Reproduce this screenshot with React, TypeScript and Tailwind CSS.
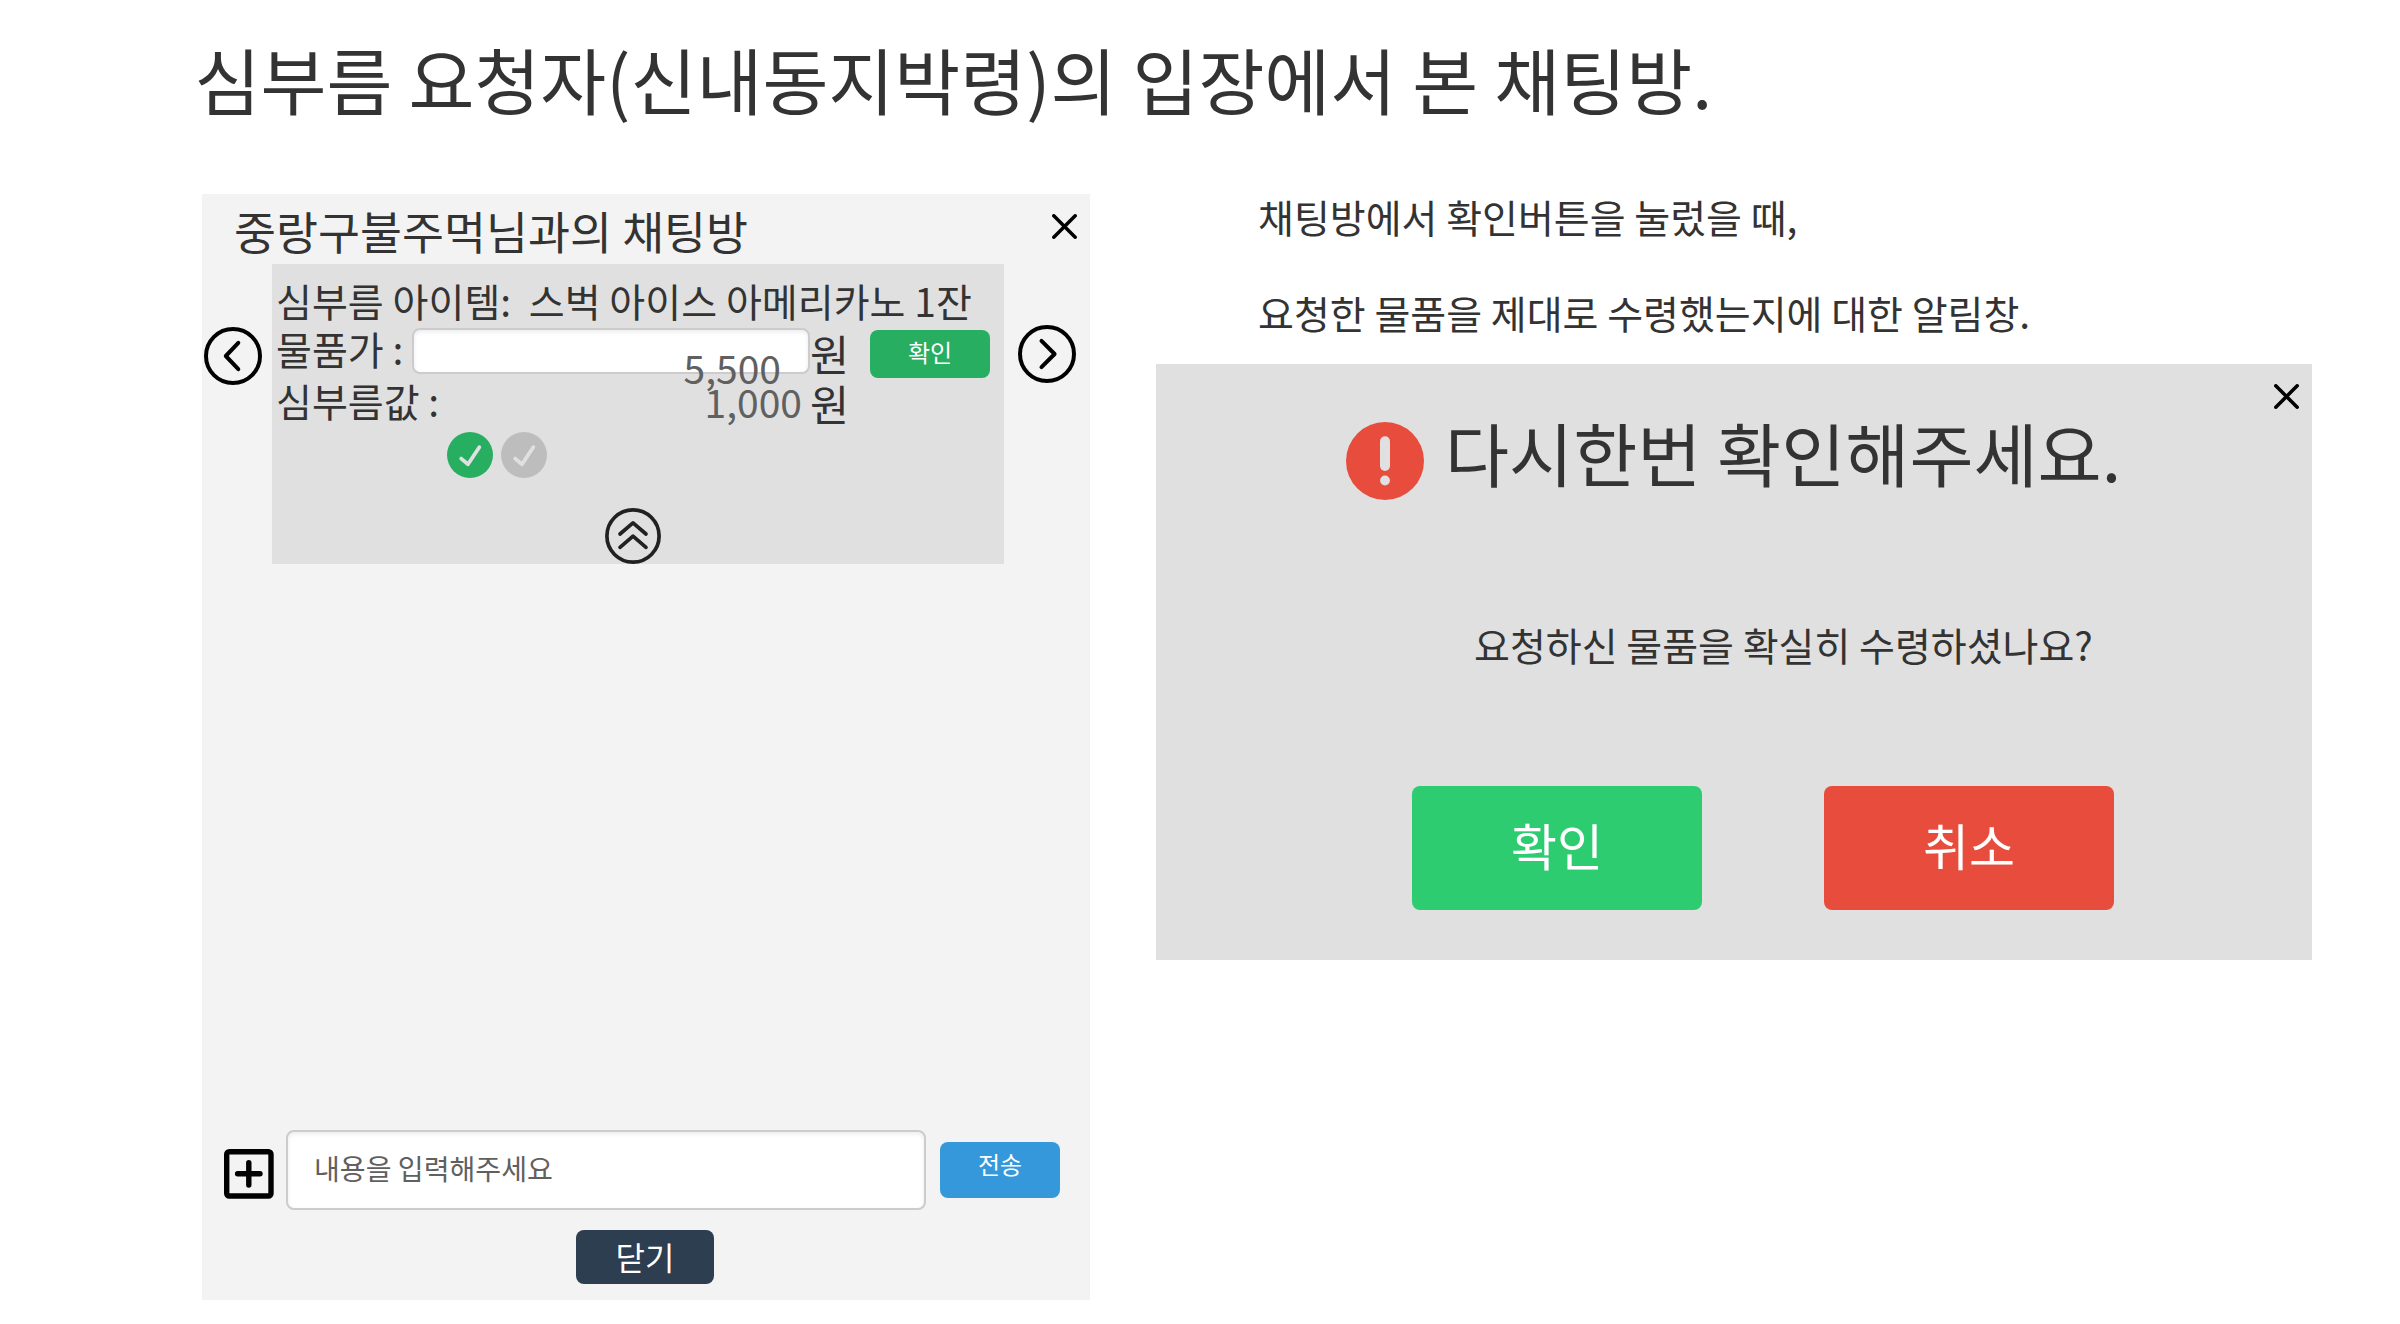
import type { ReactNode } from "react";

function CloseIcon({ className = "" }: { className?: string }) {
  return (
    <svg viewBox="0 0 25 25" className={`block h-[25px] w-[25px] ${className}`} fill="none" stroke="#000" strokeWidth="3.5" strokeLinecap="round">
      <path d="M1.8 1.8 23.2 23.2M23.2 1.8 1.8 23.2" />
    </svg>
  );
}

function ArrowCircle({ d }: { d: string }) {
  return (
    <svg viewBox="0 0 58 58" className="block h-[58px] w-[58px]" fill="none" stroke="#000" strokeWidth="4" strokeLinecap="round" strokeLinejoin="round">
      <circle cx="29" cy="29" r="27" />
      <path d={d} />
    </svg>
  );
}

function CheckCircle({ className }: { className: string }) {
  return (
    <svg viewBox="0 0 46 46" className={`block h-[46px] w-[46px] ${className}`}>
      <circle cx="23" cy="23" r="23" fill="currentColor" />
      <path d="M14.2 26.6 21 32.3 32.3 15.2" fill="none" stroke="#e0e0e0" strokeWidth="3.8" strokeLinecap="round" strokeLinejoin="round" />
    </svg>
  );
}

function CollapseIcon() {
  return (
    <svg viewBox="0 0 56 56" className="block h-14 w-14" fill="none" stroke="#212121" strokeWidth="3.7" strokeLinecap="round" strokeLinejoin="round">
      <circle cx="28" cy="28" r="26.1" />
      <path d="M15 26 28 14.8 41 26M15 39.3 28 28.1 41 39.3" />
    </svg>
  );
}

function AddIcon() {
  return (
    <svg viewBox="0 0 50 50" className="block h-[50px] w-[50px]" fill="none" stroke="#000" strokeWidth="5.4" strokeLinecap="round">
      <rect x="2.7" y="2.7" width="44.3" height="44.3" rx="2.5" />
      <path d="M24.8 13.6v22.4M13.6 24.8H36" />
    </svg>
  );
}

function AlertIcon() {
  return (
    <svg viewBox="0 0 78 78" className="block h-[78px] w-[78px]">
      <circle cx="39" cy="39" r="39" fill="#e74c3c" />
      <rect x="34" y="14.3" width="10" height="34.7" rx="5" fill="#e0e0e0" />
      <circle cx="39" cy="58.5" r="4.9" fill="#e0e0e0" />
    </svg>
  );
}

function DialogButton({ className, children }: { className: string; children: ReactNode }) {
  return (
    <button className={`flex h-[124px] w-[290px] items-center justify-center rounded-lg pb-2 text-[50px] leading-none text-white ${className}`}>
      {children}
    </button>
  );
}

function ChatRoom() {
  return (
    <section className="flex h-[1106px] w-[888px] flex-col bg-[#f3f3f3]">
      <header className="flex h-[70px] items-start justify-between pl-8 pr-[13px] pt-1.5">
        <h2 className="text-[45.65px] leading-[60px]">중랑구불주먹님과의 채팅방</h2>
        <CloseIcon className="mt-3.5" />
      </header>

      <div className="flex items-start">
        <div className="w-[70px] pl-0.5 pt-[63px]">
          <ArrowCircle d="M34.3 15.8 21.8 29 34.3 42.2" />
        </div>
        <div className="flex h-[300px] w-[732px] flex-col text-[39px]">
          <div className="flex h-full flex-col bg-[#e0e0e0] pl-1">
            <p className="mt-[11px] h-[51px] whitespace-pre leading-[50px] tracking-[0.04px]">심부름 아이템:  스벅 아이스 아메리카노 1잔</p>
            <div className="flex h-[50px] items-start">
              <span className="-mt-px w-[136px] leading-[46px]">물품가 :</span>
              <div className="relative mt-0.5 h-[46px] w-[398px] rounded-lg border-2 border-[#ccc] bg-white shadow-[inset_0_2px_4px_rgba(0,0,0,0.08)]">
                <span className="absolute right-[27px] top-[12px] leading-[50px] text-[#606060]">5,500</span>
              </div>
              <span className="mt-1 text-[42.5px] leading-[46px]">원</span>
              <button className="ml-auto mr-3.5 mt-1 flex h-12 w-[120px] shrink-0 items-center justify-center rounded-lg bg-[#27ae60] pb-1 text-2xl leading-none text-white">
                확인
              </button>
            </div>
            <div className="flex h-[56px] items-start">
              <span className="-mt-px w-[280px] leading-[50px]">심부름값 :</span>
              <span className="w-[246px] text-right leading-[50px] text-[#606060]">1,000</span>
              <span className="ml-2 mt-1 text-[42.5px] leading-[46px]">원</span>
            </div>
            <div className="flex gap-2 pl-[171px]">
              <CheckCircle className="text-[#27ae60]" />
              <CheckCircle className="text-[#bdbdbd]" />
            </div>
            <div className="mt-auto pl-[329px]">
              <CollapseIcon />
            </div>
          </div>
        </div>
        <div className="pl-3.5 pt-[61px]">
          <ArrowCircle d="M23.5 15.8 36.6 29 23.5 42.2" />
        </div>
      </div>

      <div className="mt-auto flex h-20 items-start pl-[22px]">
        <div className="mt-[19px]">
          <AddIcon />
        </div>
        <div className="ml-3 flex h-20 w-[640px] items-center rounded-lg border-2 border-[#ccc] bg-white pb-1 pl-[26px] text-[28.1px] leading-none text-[#606060] shadow-[inset_0_2px_4px_rgba(0,0,0,0.08)]">
          내용을 입력해주세요
        </div>
        <button className="ml-3.5 mt-3 flex h-14 w-[120px] items-center justify-center rounded-lg bg-[#3498db] pb-3 text-2xl leading-none text-white">
          전송
        </button>
      </div>
      <div className="mb-4 mt-5 flex pl-[374px]">
        <button className="flex h-[54px] w-[138px] items-center justify-center rounded-lg bg-[#2c3e50] pb-0.5 text-[32px] leading-none text-white">
          닫기
        </button>
      </div>
    </section>
  );
}

function ConfirmDialog() {
  return (
    <section className="flex h-[596px] w-[1156px] flex-col bg-[#e0e0e0]">
      <div className="flex h-[45px] justify-end pr-[13px] pt-5">
        <CloseIcon />
      </div>
      <div className="flex h-[100px] items-start pl-[190px]">
        <div className="mt-[13px]">
          <AlertIcon />
        </div>
        <h2 className="ml-[21px] mt-px text-[69.7px] leading-[84px]">다시한번 확인해주세요.</h2>
      </div>
      <p className="mt-[110px] pl-[318px] text-[39px] leading-[50px]">요청하신 물품을 확실히 수령하셨나요?</p>
      <div className="mt-auto flex gap-[122px] pb-[50px] pl-64">
        <DialogButton className="bg-[#2ecc71]">확인</DialogButton>
        <DialogButton className="bg-[#e74c3c]">취소</DialogButton>
      </div>
    </section>
  );
}

export default function App() {
  return (
    <main className="h-[1324px] w-[2400px] overflow-hidden whitespace-nowrap bg-white font-['Noto_Sans_CJK_KR',sans-serif] text-[#333]">
      <h1 className="h-[194px] pl-[194.5px] pt-[34px] text-[71.7px] leading-[88px]">
        심부름 요청자(신내동지박령)의 입장에서 본 채팅방.
      </h1>
      <div className="flex items-start gap-[66px] pl-[202px]">
        <ChatRoom />
        <div>
          <div className="-mt-[3px] flex h-[173px] flex-col gap-[46px] pl-[102px] text-[39px] leading-[50px]">
            <p>채팅방에서 확인버튼을 눌렀을 때,</p>
            <p>요청한 물품을 제대로 수령했는지에 대한 알림창.</p>
          </div>
          <ConfirmDialog />
        </div>
      </div>
    </main>
  );
}
